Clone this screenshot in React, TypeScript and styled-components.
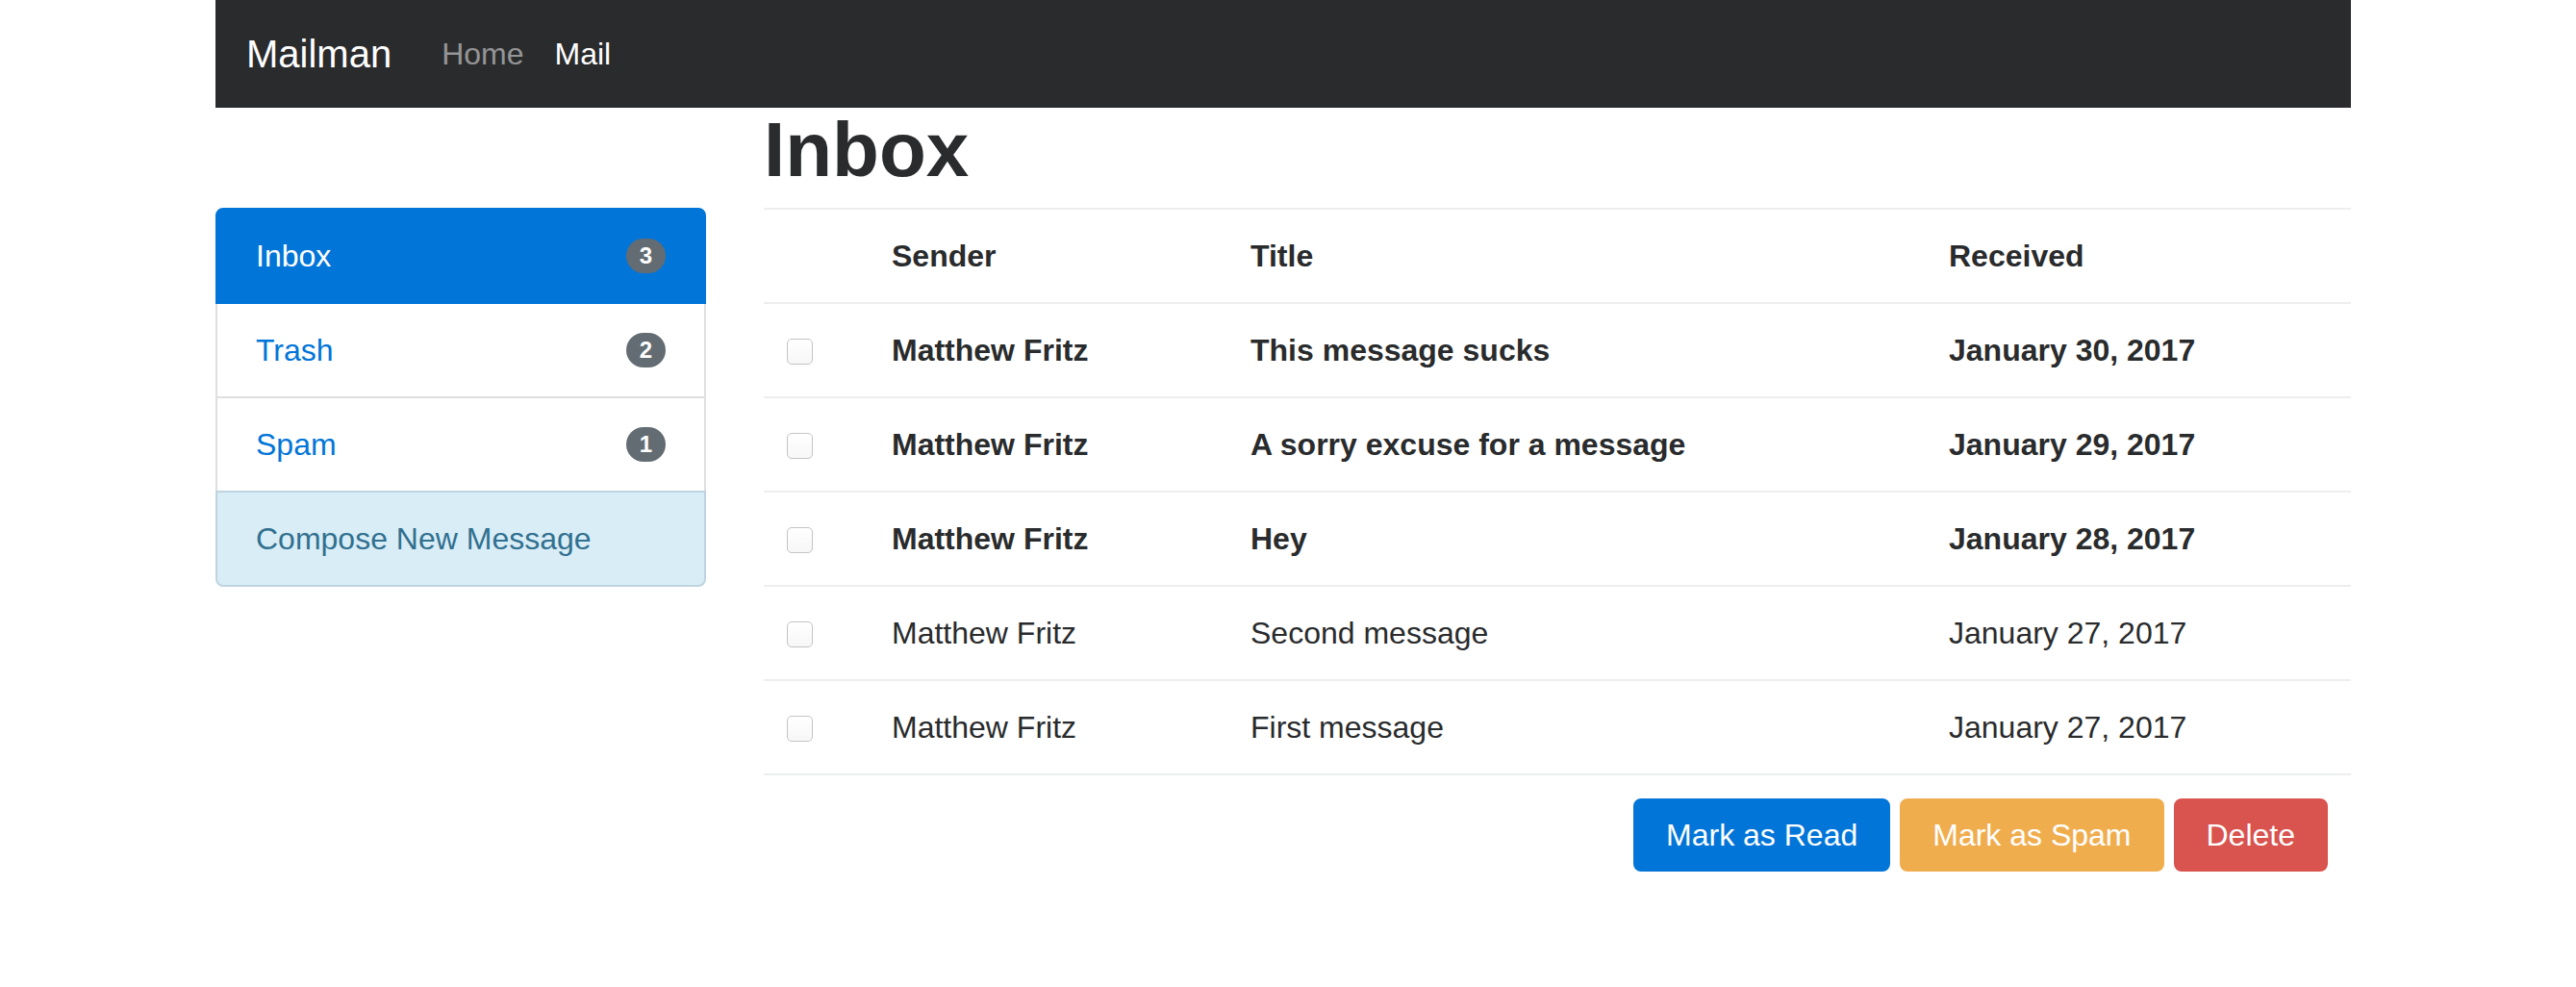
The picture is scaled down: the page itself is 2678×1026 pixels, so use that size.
import React from "react";
import styled, { createGlobalStyle, css } from "styled-components";

const GlobalStyle = createGlobalStyle`
  html, body { margin: 0; padding: 0; background: #fff; }
  body {
    font-family: "Liberation Sans", Arial, Helvetica, sans-serif;
    font-size: 32px;
    line-height: 1.5;
    color: #292b2c;
  }
  * { box-sizing: border-box; }
`;

const Page = styled.div`
  width: 2230px;
  padding-right: 10px;
  margin: 0 auto;
`;

const Navbar = styled.nav`
  display: flex;
  align-items: center;
  height: 112px;
  padding: 0 32px;
  background: #2a2b2d;
`;

const Brand = styled.a`
  font-size: 40px;
  line-height: 60px;
  color: #fff;
  text-decoration: none;
  margin-right: 36px;
`;

const NavLink = styled.a<{ $active?: boolean }>`
  font-size: 32px;
  line-height: 48px;
  padding: 0 16px;
  text-decoration: none;
  color: ${(p) => (p.$active ? "#fff" : "rgba(255,255,255,0.5)")};
`;

const Layout = styled.div`
  display: flex;
  align-items: flex-start;
  gap: 60px;
`;

const Sidebar = styled.aside`
  flex: none;
  width: 510px;
  padding-top: 104px;
`;

const Main = styled.main`
  flex: 1;
  min-width: 0;
`;

const Heading = styled.h1`
  margin: 0 0 16px;
  font-size: 80px;
  line-height: 88px;
  font-weight: 700;
  color: #292b2c;
`;

type Variant = "active" | "link" | "info";

const ListGroup = styled.ul`
  list-style: none;
  margin: 0;
  padding: 0;
  display: flex;
  flex-direction: column;
`;

const ListItem = styled.li<{ $variant: Variant }>`
  position: relative;
  display: flex;
  align-items: center;
  justify-content: space-between;
  padding: 24px 40px;
  font-size: 32px;
  line-height: 48px;
  border: 2px solid rgba(0, 0, 0, 0.125);
  margin-bottom: -2px;
  background: #fff;
  color: #0275d8;

  &:first-child {
    border-top-left-radius: 8px;
    border-top-right-radius: 8px;
  }
  &:last-child {
    margin-bottom: 0;
    border-bottom-left-radius: 8px;
    border-bottom-right-radius: 8px;
  }

  ${(p) =>
    p.$variant === "active" &&
    css`
      z-index: 2;
      background: #0275d8;
      border-color: #0275d8;
      color: #fff;
    `}
  ${(p) =>
    p.$variant === "info" &&
    css`
      background: #d9edf7;
      color: #31708f;
      border-color: #bfd4e0;
    `}
`;

const Badge = styled.span`
  display: inline-block;
  font-size: 24px;
  font-weight: 700;
  line-height: 1;
  padding: 6px 14px;
  border-radius: 320px;
  background: #636c72;
  color: #fff;
`;

const Table = styled.table`
  width: 100%;
  border-collapse: collapse;
  table-layout: fixed;
`;

const Col = styled.col<{ $w: number }>`
  width: ${(p) => p.$w}px;
`;

const Th = styled.th`
  text-align: left;
  padding: 24px;
  line-height: 48px;
  font-weight: 700;
  vertical-align: top;
  border-top: 2px solid #eceeef;
`;

const Td = styled.td<{ $bold?: boolean }>`
  padding: 24px;
  line-height: 48px;
  vertical-align: top;
  white-space: nowrap;
  border-top: 2px solid #eceeef;
  font-weight: ${(p) => (p.$bold ? 700 : 400)};
`;

const BodyRow = styled.tr`
  &:last-child td {
    border-bottom: 2px solid #eceeef;
  }
`;

const Check = styled.input`
  appearance: none;
  -webkit-appearance: none;
  display: block;
  width: 27px;
  height: 27px;
  margin: 12px 0 0;
  border: 1.5px solid #c4c4c4;
  border-radius: 5px;
  background: linear-gradient(#ffffff, #f7f7f7);
`;

const Actions = styled.div`
  display: flex;
  justify-content: flex-end;
  gap: 10px;
  padding-right: 24px;
  margin-top: 24px;
`;

type BtnVariant = "primary" | "warning" | "danger";
const btnColors: Record<BtnVariant, string> = {
  primary: "#0275d8",
  warning: "#f0ad4e",
  danger: "#d9534f",
};

const Button = styled.button<{ $variant: BtnVariant }>`
  font-family: inherit;
  font-size: 32px;
  line-height: 40px;
  padding: 16px 32px;
  border-radius: 8px;
  color: #fff;
  background: ${(p) => btnColors[p.$variant]};
  border: 2px solid ${(p) => btnColors[p.$variant]};
`;

const folders: { name: string; count?: number; variant: Variant }[] = [
  { name: "Inbox", count: 3, variant: "active" },
  { name: "Trash", count: 2, variant: "link" },
  { name: "Spam", count: 1, variant: "link" },
  { name: "Compose New Message", variant: "info" },
];

const messages = [
  { sender: "Matthew Fritz", title: "This message sucks", date: "January 30, 2017", unread: true },
  { sender: "Matthew Fritz", title: "A sorry excuse for a message", date: "January 29, 2017", unread: true },
  { sender: "Matthew Fritz", title: "Hey", date: "January 28, 2017", unread: true },
  { sender: "Matthew Fritz", title: "Second message", date: "January 27, 2017", unread: false },
  { sender: "Matthew Fritz", title: "First message", date: "January 27, 2017", unread: false },
];

export default function App() {
  return (
    <>
      <GlobalStyle />
      <Page>
        <Navbar>
          <Brand href="#">Mailman</Brand>
          <NavLink href="#">Home</NavLink>
          <NavLink href="#" $active>
            Mail
          </NavLink>
        </Navbar>
        <Layout>
          <Sidebar>
            <ListGroup>
              {folders.map((f) => (
                <ListItem key={f.name} $variant={f.variant}>
                  <span>{f.name}</span>
                  {f.count !== undefined && <Badge>{f.count}</Badge>}
                </ListItem>
              ))}
            </ListGroup>
          </Sidebar>
          <Main>
            <Heading>Inbox</Heading>
            <Table>
              <colgroup>
                <Col $w={109} />
                <Col $w={373} />
                <Col $w={726} />
                <Col $w={442} />
              </colgroup>
              <thead>
                <tr>
                  <Th />
                  <Th>Sender</Th>
                  <Th>Title</Th>
                  <Th>Received</Th>
                </tr>
              </thead>
              <tbody>
                {messages.map((m, i) => (
                  <BodyRow key={i}>
                    <Td>
                      <Check type="checkbox" />
                    </Td>
                    <Td $bold={m.unread}>{m.sender}</Td>
                    <Td $bold={m.unread}>{m.title}</Td>
                    <Td $bold={m.unread}>{m.date}</Td>
                  </BodyRow>
                ))}
              </tbody>
            </Table>
            <Actions>
              <Button $variant="primary">Mark as Read</Button>
              <Button $variant="warning">Mark as Spam</Button>
              <Button $variant="danger">Delete</Button>
            </Actions>
          </Main>
        </Layout>
      </Page>
    </>
  );
}
